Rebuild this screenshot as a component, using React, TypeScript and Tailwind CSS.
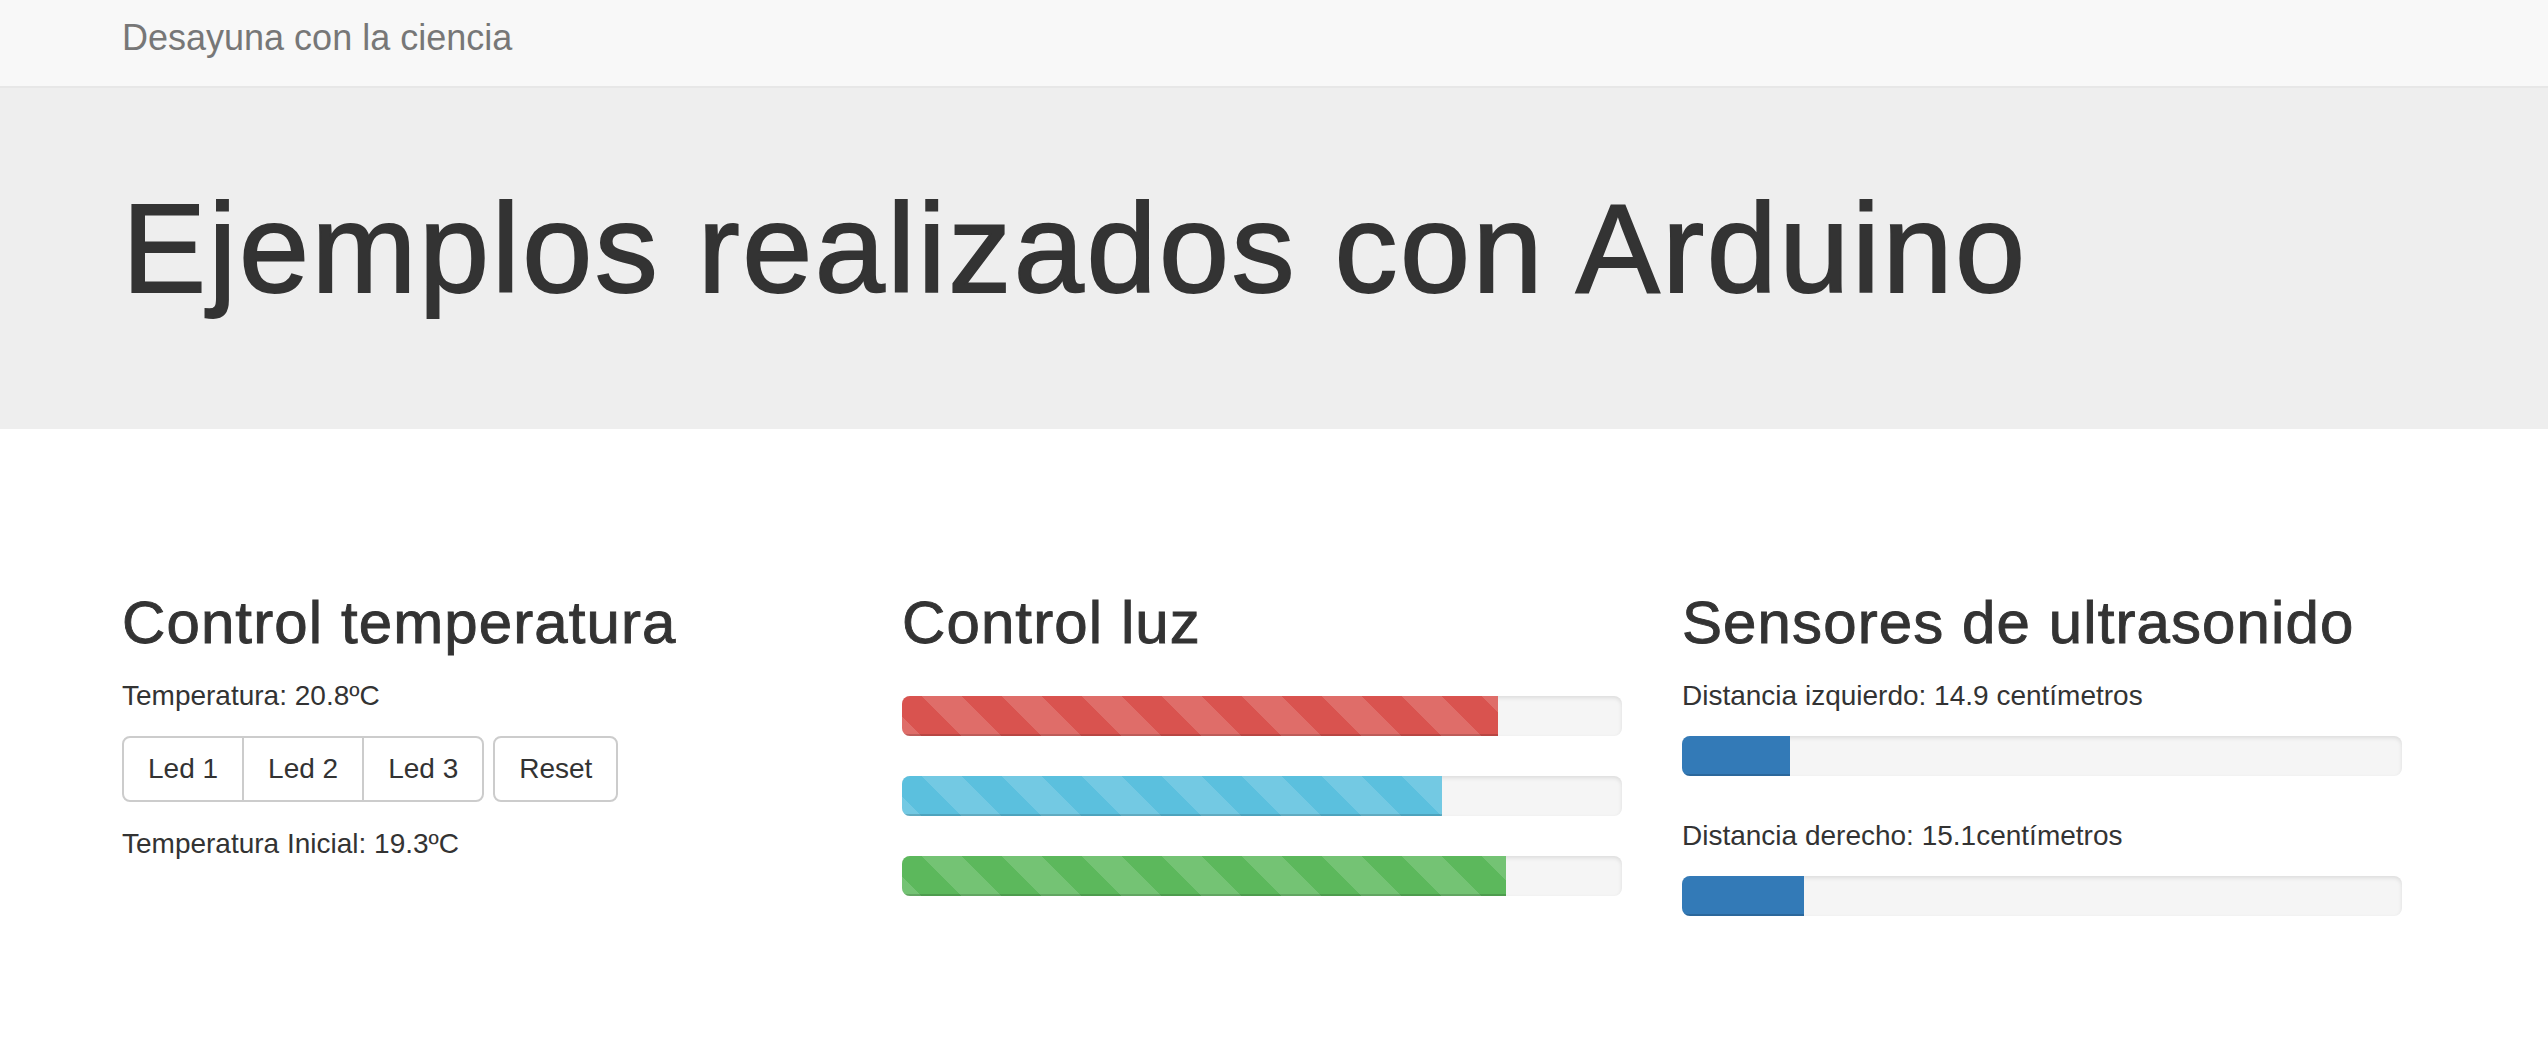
const lightBars = [
  { width: 596, color: 'bg-[#d9534f]' },
  { width: 540, color: 'bg-[#5bc0de]' },
  { width: 604, color: 'bg-[#5cb85c]' },
];

const stripes =
  'bg-[image:linear-gradient(45deg,rgba(255,255,255,.15)_25%,transparent_25%,transparent_50%,rgba(255,255,255,.15)_50%,rgba(255,255,255,.15)_75%,transparent_75%,transparent)] bg-[length:80px_80px] bg-[position:20px_0]';

function Progress({ width, color, striped }: { width: number; color: string; striped?: boolean }) {
  return (
    <div className="h-10 w-full overflow-hidden rounded-lg bg-[#f5f5f5] shadow-[inset_0_2px_4px_rgba(0,0,0,0.1)]">
      <div
        className={`h-full ${color} shadow-[inset_0_-2px_0_rgba(0,0,0,0.15)] ${striped ? stripes : ''}`}
        style={{ width }}
      />
    </div>
  );
}

function Btn({ children, className = '' }: { children: React.ReactNode; className?: string }) {
  return (
    <button
      type="button"
      className={`border-2 border-[#ccc] bg-white px-6 py-[11px] text-[28px] leading-[40px] text-[#333] ${className}`}
    >
      {children}
    </button>
  );
}

const h2 = 'text-[60px] leading-[66px] tracking-[1.1px] [-webkit-text-stroke:0.9px_#333]';

export default function App() {
  return (
    <div className="min-h-[1038px] bg-white font-['Liberation_Sans',Arial,sans-serif] text-[#333]">
      <nav className="box-border h-[88px] border-b-2 border-[#e7e7e7] bg-[#f8f8f8] pl-[122px] pt-[18px]">
        <span className="block text-[36px] leading-[40px] text-[#777]">Desayuna con la ciencia</span>
      </nav>

      <header className="box-border h-[341px] bg-[#eee] pl-[122px] pt-[91px]">
        <h1 className="text-[126px] leading-[139px] tracking-[2.5px] text-[#333] [-webkit-text-stroke:1.8px_#333]">
          Ejemplos realizados con Arduino
        </h1>
      </header>

      <main className="grid grid-cols-[720px_720px_720px] gap-x-[60px] pl-[122px] pt-[161px]">
        <section>
          <h2 className={`mb-5 ${h2}`}>Control temperatura</h2>
          <p className="text-[28px] leading-[40px]">Temperatura: 20.8ºC</p>
          <div className="mt-5 flex items-start">
            <div className="flex">
              <Btn className="rounded-l-lg">Led 1</Btn>
              <Btn className="-ml-[2px]">Led 2</Btn>
              <Btn className="-ml-[2px] rounded-r-lg">Led 3</Btn>
            </div>
            <Btn className="ml-[9px] rounded-lg">Reset</Btn>
          </div>
          <p className="mt-[22px] text-[28px] leading-[40px]">Temperatura Inicial: 19.3ºC</p>
        </section>

        <section>
          <h2 className={`mb-10 ${h2}`}>Control luz</h2>
          <div className="flex flex-col gap-10">
            {lightBars.map((b, i) => (
              <Progress key={i} width={b.width} color={b.color} striped />
            ))}
          </div>
        </section>

        <section>
          <h2 className={`mb-5 ${h2}`}>Sensores de ultrasonido</h2>
          <p className="mb-5 text-[28px] leading-[40px]">Distancia izquierdo: 14.9 centímetros</p>
          <Progress width={108} color="bg-[#337ab7]" />
          <p className="mb-5 mt-10 text-[28px] leading-[40px]">Distancia derecho: 15.1centímetros</p>
          <Progress width={122} color="bg-[#337ab7]" />
        </section>
      </main>
    </div>
  );
}
